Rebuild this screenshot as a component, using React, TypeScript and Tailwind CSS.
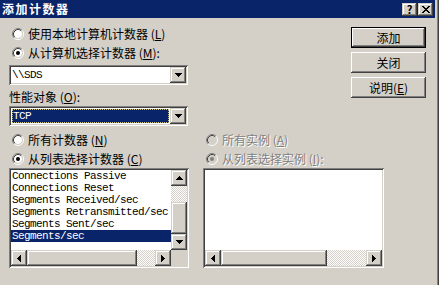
import type { ReactNode } from "react";

// classic 3D edges
const RAISED =
  "shadow-[inset_-1px_-1px_#404040,inset_1px_1px_#d4d0c8,inset_-2px_-2px_#808080,inset_2px_2px_#ffffff]";
const BUTTON =
  "shadow-[inset_-1px_-1px_#404040,inset_1px_1px_#ffffff,inset_-2px_-2px_#808080,inset_2px_2px_#d4d0c8]";
const SUNKEN =
  "shadow-[inset_1px_1px_#808080,inset_-1px_-1px_#ffffff,inset_2px_2px_#404040,inset_-2px_-2px_#d4d0c8]";
const CHECKER =
  "bg-[image:repeating-conic-gradient(#d4d0c8_0%_25%,#ffffff_0%_50%)] bg-[length:2px_2px]";
const MONO = "font-['Liberation_Mono',monospace] text-[11px] tracking-[-0.6px]";

const counters = [
  "Connections Passive",
  "Connections Reset",
  "Segments Received/sec",
  "Segments Retransmitted/sec",
  "Segments Sent/sec",
  "Segments/sec",
];

function Arrow({ dir }: { dir: "up" | "down" | "left" | "right" }) {
  const rows = [0, 1, 2, 3];
  if (dir === "up" || dir === "down") {
    return (
      <svg width="7" height="4" viewBox="0 0 7 4" shapeRendering="crispEdges">
        {rows.map((i) => (
          <rect key={i} x={i} y={dir === "down" ? i : 3 - i} width={7 - 2 * i} height="1" fill="#000" />
        ))}
      </svg>
    );
  }
  return (
    <svg width="4" height="7" viewBox="0 0 4 7" shapeRendering="crispEdges">
      {rows.map((i) => (
        <rect key={i} x={dir === "right" ? i : 3 - i} y={i} width="1" height={7 - 2 * i} fill="#000" />
      ))}
    </svg>
  );
}

function ScrollBtn({ dir }: { dir: "up" | "down" | "left" | "right" }) {
  return (
    <div className={`flex h-[16px] w-[16px] shrink-0 items-center justify-center bg-[#d4d0c8] ${RAISED}`}>
      <Arrow dir={dir} />
    </div>
  );
}

function Radio({ checked, disabled }: { checked?: boolean; disabled?: boolean }) {
  return (
    <svg width="12" height="12" viewBox="0 0 12 12" className="shrink-0">
      <circle cx="6" cy="6" r="4" fill={disabled ? "#d4d0c8" : "#ffffff"} />
      <path d="M2.11 9.89A5.5 5.5 0 0 1 9.89 2.11" stroke="#808080" fill="none" />
      <path d="M9.89 2.11A5.5 5.5 0 0 1 2.11 9.89" stroke="#ffffff" fill="none" />
      <path d="M2.82 9.18A4.5 4.5 0 0 1 9.18 2.82" stroke="#404040" fill="none" />
      <path d="M9.18 2.82A4.5 4.5 0 0 1 2.82 9.18" stroke="#d4d0c8" fill="none" />
      {checked && <circle cx="6" cy="6" r="2" fill={disabled ? "#808080" : "#000000"} />}
    </svg>
  );
}

function RadioRow({
  checked,
  disabled,
  className = "",
  children,
}: {
  checked?: boolean;
  disabled?: boolean;
  className?: string;
  children: ReactNode;
}) {
  return (
    <div className={`flex h-[14px] items-center gap-[4px] pl-[3px] ${className}`}>
      <Radio checked={checked} disabled={disabled} />
      <span
        className={
          disabled
            ? "whitespace-nowrap text-[#808080] [text-shadow:1px_1px_0_#ffffff]"
            : "whitespace-nowrap text-black"
        }
      >
        {children}
      </span>
    </div>
  );
}

function Combo({ children, className = "" }: { children: ReactNode; className?: string }) {
  return (
    <div className={`flex h-[20px] w-[179px] bg-white p-[2px] ${SUNKEN} ${className}`}>
      <div className="flex min-w-0 flex-1 items-stretch">{children}</div>
      <ScrollBtn dir="down" />
    </div>
  );
}

function PushButton({ children, isDefault }: { children: ReactNode; isDefault?: boolean }) {
  return (
    <div className={isDefault ? "h-[21px] w-[75px] border border-black" : "h-[21px] w-[75px]"}>
      <div className={`flex h-full w-full items-center justify-center bg-[#d4d0c8] text-[12px] ${BUTTON}`}>
        {children}
      </div>
    </div>
  );
}

export default function App() {
  return (
    <div className="flex h-[285px] w-[439px] overflow-hidden bg-[#d4d0c8] font-['Noto_Sans_CJK_SC',sans-serif] text-[12px] leading-[14px] text-black">
      <div className="flex w-[435px] flex-col">
        {/* title bar */}
        <div className="flex h-[18px] items-center bg-[#0a246a] pl-[2px] pr-[2px]">
          <span className="font-bold tracking-[1.5px] text-white">添加计数器</span>
          <div className="ml-auto flex gap-[1px]">
            <div className={`flex h-[13px] w-[15px] items-center justify-center bg-[#d4d0c8] text-[11px] font-bold leading-none ${RAISED}`}>
              ?
            </div>
            <div className={`flex h-[13px] w-[15px] items-center justify-center bg-[#d4d0c8] ${RAISED}`}>
              <svg width="8" height="7" viewBox="0 0 8 7" shapeRendering="crispEdges">
                {[0, 1, 2, 3, 4, 5, 6].map((r) => (
                  <g key={r} fill="#000">
                    <rect x={r} y={r} width="2" height="1" />
                    <rect x={6 - r} y={r} width="2" height="1" />
                  </g>
                ))}
              </svg>
            </div>
          </div>
        </div>

        {/* top section */}
        <div className="flex pt-[9px]">
          <div className="flex flex-col pl-[9px]">
            <RadioRow>
              使用本地计算机计数器 (<u>L</u>)
            </RadioRow>
            <RadioRow checked className="mt-[5px]">
              从计算机选择计数器 (<u>M</u>):
            </RadioRow>
            <Combo className="mt-[5px]">
              <div className={`flex items-center pl-px ${MONO}`}>{"\\\\SDS"}</div>
            </Combo>
            <div className="mt-[5px] h-[14px] whitespace-nowrap">
              性能对象 (<u>O</u>):
            </div>
            <Combo className="mt-[2px]">
              <div className={`m-px flex flex-1 items-center border border-dotted border-[#c8c080] bg-[#0a246a] text-white ${MONO}`}>
                TCP
              </div>
            </Combo>
          </div>
          <div className="ml-auto mr-[9px] flex flex-col gap-[4px]">
            <PushButton isDefault>添加</PushButton>
            <PushButton>关闭</PushButton>
            <PushButton>
              说明(<u>E</u>)
            </PushButton>
          </div>
        </div>

        {/* bottom section */}
        <div className="mt-[7px] flex">
          <div className="flex flex-col pl-[9px]">
            <RadioRow>
              所有计数器 (<u>N</u>)
            </RadioRow>
            <RadioRow checked className="mt-[5px]">
              从列表选择计数器 (<u>C</u>)
            </RadioRow>
            <div className={`mt-[2px] flex h-[100px] w-[180px] flex-col bg-white p-[2px] ${SUNKEN}`}>
              <div className="flex min-h-0 flex-1">
                <div className={`flex min-w-0 flex-1 flex-col overflow-hidden ${MONO}`}>
                  {counters.map((c, i) => (
                    <div
                      key={c}
                      className={
                        i === counters.length - 1
                          ? "h-[12px] whitespace-nowrap bg-[#0a246a] pl-px leading-[12px] text-white"
                          : "h-[12px] whitespace-nowrap pl-px leading-[12px]"
                      }
                    >
                      {c}
                    </div>
                  ))}
                </div>
                <div className="flex w-[16px] flex-col">
                  <ScrollBtn dir="up" />
                  <div className={`h-[16px] ${CHECKER}`} />
                  <div className={`h-[32px] bg-[#d4d0c8] ${RAISED}`} />
                  <ScrollBtn dir="down" />
                </div>
              </div>
              <div className="flex h-[16px]">
                <ScrollBtn dir="left" />
                <div className={`w-[110px] bg-[#d4d0c8] ${RAISED}`} />
                <div className={`flex-1 ${CHECKER}`} />
                <ScrollBtn dir="right" />
                <div className="w-[16px] bg-[#d4d0c8]" />
              </div>
            </div>
          </div>

          <div className="ml-[14px] flex flex-col">
            <RadioRow disabled className="pl-[2px]">
              所有实例 (<u>A</u>)
            </RadioRow>
            <RadioRow checked disabled className="mt-[5px] pl-[2px]">
              从列表选择实例 (<u>I</u>):
            </RadioRow>
            <div className={`mt-[2px] flex h-[100px] w-[181px] flex-col bg-white p-[2px] ${SUNKEN}`}>
              <div className="flex-1" />
              <div className="flex h-[16px]">
                <ScrollBtn dir="left" />
                <div className={`w-[106px] bg-[#d4d0c8] ${RAISED}`} />
                <div className={`flex-1 ${CHECKER}`} />
                <ScrollBtn dir="right" />
              </div>
            </div>
          </div>
        </div>
      </div>

      {/* window frame, right edge */}
      <div className="flex">
        <div className="w-[2px] bg-[#d4d0c8]" />
        <div className="w-px bg-[#808080]" />
        <div className="w-px bg-[#404040]" />
      </div>
    </div>
  );
}
